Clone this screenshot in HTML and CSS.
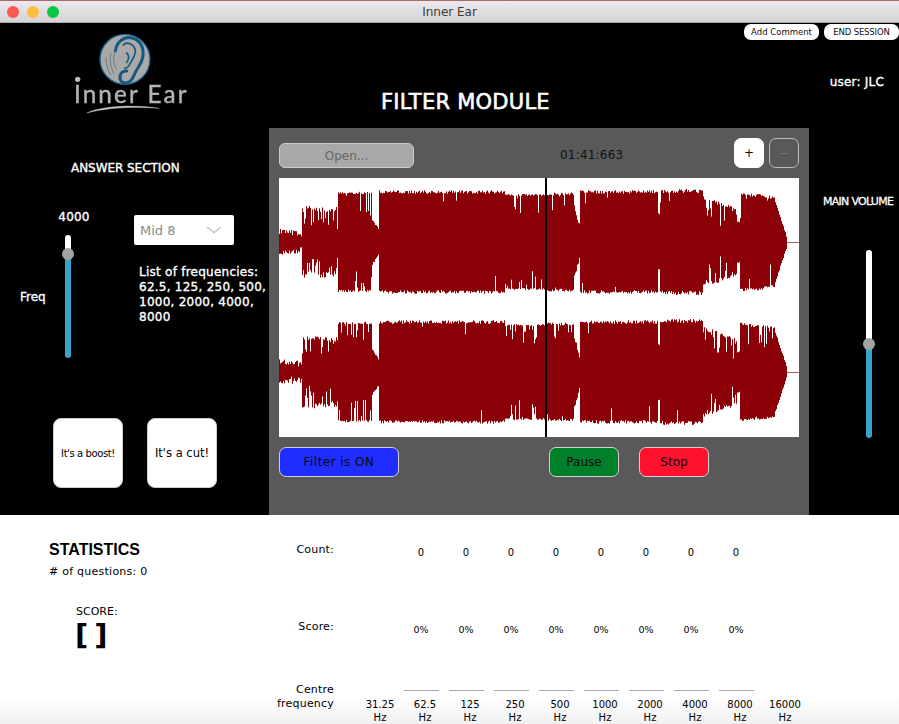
FILE: index.html
```html
<!DOCTYPE html>
<html lang="en">
<head>
<meta charset="utf-8">
<title>Inner Ear</title>
<link rel="stylesheet" href="styles.css">
</head>
<body>
<div class="window">
  <div class="titlebar">
    <div class="lights"><span class="light red"></span><span class="light amber"></span><span class="light green"></span></div>
    <div class="wintitle">Inner Ear</div>
  </div>
  <div class="stage">
    <header class="top">
      <svg class="logo" viewBox="0 0 420 285" width="140" height="95">
        <circle cx="195" cy="103" r="75" class="logo-disc"/>
        <path class="logo-ear" d="M166 78C170 50 190 36 212 38C238 41 252 66 249 92C247 114 232 128 224 146C218 160 214 172 198 174C182 175 174 158 184 144C188 139 194 137 200 138"/>
        <path class="logo-ear thin" d="M190 60C200 48 222 56 226 76C228 90 216 104 208 120C205 126 200 130 194 130"/>
        <path class="logo-ear thin" d="M200 84C208 90 208 102 200 112"/>
        <path class="logo-wave" d="M166 76C158 94 160 116 170 134M153 84C148 102 150 122 162 146M139 96C136 112 142 132 152 150"/>
        <circle cx="53" cy="163" r="8" class="logo-word-dot"/>
        <text x="42" y="234" class="logo-word">Inner Ear</text>
        <path class="logo-swoosh" d="M80 264C130 242 220 238 298 250C220 244 140 248 80 264Z"/>
      </svg>
      <h1 class="module">FILTER MODULE</h1>
      <div class="account">
        <div class="tools">
          <button class="tool">Add Comment</button>
          <button class="tool">END SESSION</button>
        </div>
        <div class="user">user: JLC</div>
      </div>
    </header>
    <div class="main">
      <section class="answer">
        <h2 class="answer-title">ANSWER SECTION</h2>
        <div class="answer-mid">
          <div class="freq-label">Freq</div>
          <div class="freq-col">
            <div class="freq-value">4000</div>
            <div class="slider short" style="--pos:15.4%"><span class="knob"></span></div>
          </div>
          <div class="choice">
            <div class="select"><span>Mid 8</span>
              <svg class="chevron" viewBox="0 0 16 8" width="16" height="8"><path d="M1 1L8 6.5L15 1"/></svg>
            </div>
            <p class="freq-list">List of frequencies: 62.5, 125, 250, 500, 1000, 2000, 4000, 8000</p>
          </div>
        </div>
        <div class="verdicts">
          <button class="verdict small">It's a boost!</button>
          <button class="verdict">It's a cut!</button>
        </div>
      </section>
      <section class="panel">
        <div class="panel-top">
          <button class="open">Open...</button>
          <div class="time">01:41:663</div>
          <div class="zoomers">
            <button class="zoomer on">+</button>
            <button class="zoomer">−</button>
          </div>
        </div>
        <div class="wave">
          <svg id="wave" viewBox="0 0 520 259" width="520" height="259"></svg>
          <span class="playhead"></span>
        </div>
        <div class="transport">
          <button class="tbtn filter">Filter is ON</button>
          <button class="tbtn pause">Pause</button>
          <button class="tbtn stop">Stop</button>
        </div>
      </section>
      <aside class="volume">
        <div class="volume-title">MAIN VOLUME</div>
        <div class="slider tall" style="--pos:50%"><span class="knob"></span></div>
      </aside>
    </div>
  </div>
  <div class="stats">
    <div class="summary">
      <h2 class="stats-title">STATISTICS</h2>
      <div class="questions"># of questions: 0</div>
      <div class="score-label">SCORE:</div>
      <div class="score-value">[ ]</div>
    </div>
    <div class="table">
      <div class="rowlabel">Count:</div>
      <span></span>
      <span class="cell">0</span><span class="cell">0</span><span class="cell">0</span><span class="cell">0</span><span class="cell">0</span><span class="cell">0</span><span class="cell">0</span><span class="cell">0</span>
      <span></span>
      <div class="rowlabel score">Score:</div>
      <span></span>
      <span class="cell pct">0%</span><span class="cell pct">0%</span><span class="cell pct">0%</span><span class="cell pct">0%</span><span class="cell pct">0%</span><span class="cell pct">0%</span><span class="cell pct">0%</span><span class="cell pct">0%</span>
      <span></span>
      <div class="rowlabel centre">Centre frequency</div>
      <span class="hz">31.25<br>Hz</span>
      <span class="hz ruled">62.5<br>Hz</span>
      <span class="hz ruled">125<br>Hz</span>
      <span class="hz ruled">250<br>Hz</span>
      <span class="hz ruled">500<br>Hz</span>
      <span class="hz ruled">1000<br>Hz</span>
      <span class="hz ruled">2000<br>Hz</span>
      <span class="hz ruled">4000<br>Hz</span>
      <span class="hz ruled">8000<br>Hz</span>
      <span class="hz">16000<br>Hz</span>
    </div>
  </div>
</div>
<script src="wave.js"></script>
</body>
</html>
```
FILE: styles.css
```css
* { box-sizing: border-box; }
html, body { margin: 0; padding: 0; background: #fff; }
body { font-family: "DejaVu Sans", "Liberation Sans", sans-serif; }
button { font-family: inherit; padding: 0; cursor: default; }
h1, h2, p { margin: 0; font-weight: 400; }

.window { width: 899px; height: 724px; display: flex; flex-direction: column; overflow: hidden; }

.titlebar { height: 23px; flex: none; display: flex; align-items: center; position: relative;
  background: linear-gradient(#ebe9eb, #d5d3d5); border-top: 1px solid #a96a6a; border-bottom: 1px solid #a9a9a9; }
.lights { display: flex; gap: 8px; padding-left: 7px; }
.light { width: 12px; height: 12px; border-radius: 50%; }
.light.red { background: #fc5753; }
.light.amber { background: #fdbc40; }
.light.green { background: #0ac840; }
.wintitle { position: absolute; left: 0; right: 0; text-align: center; font-size: 12px; color: #3c3c3c; }

.stage { height: 492px; flex: none; background: #000; color: #fff; display: flex; flex-direction: column; }
.top { height: 105px; flex: none; display: flex; }
.logo { flex: none; margin: 2px 0 0 60px; filter: blur(0.5px); }
.logo-disc { fill: #a9a9a9; stroke: #1d5f8a; stroke-width: 4; }
.logo-ear { fill: none; stroke: #14577f; stroke-width: 9; stroke-linecap: round; }
.logo-ear.thin { stroke-width: 5; }
.logo-wave { fill: none; stroke: #5f6f7a; stroke-width: 2.5; }
.logo-word { font-family: "Lato", sans-serif; font-size: 73px; fill: #b4b4b4; stroke: #b4b4b4; stroke-width: 1.2px; letter-spacing: 6.2px; }
.logo-word-dot { fill: #bcbcbc; }
.logo-swoosh { fill: #c8c8c8; stroke: #c8c8c8; stroke-width: 1; }
.module { margin: 65px 0 0 181px; font-size: 21px; line-height: 28px; -webkit-text-stroke: 0.6px #fff; white-space: nowrap; letter-spacing: 0.25px; width: 169px; }
.account { margin-left: auto; display: flex; flex-direction: column; align-items: flex-end; }
.tools { display: flex; gap: 5px; margin-top: 1px; }
.tool { width: 75px; height: 16px; border: 0; border-radius: 7px; background: #fff; color: #111; font-size: 8.5px; line-height: 16px; white-space: nowrap; }
.tool + .tool { letter-spacing: -0.15px; }
.user { margin: 34px 15px 0 0; font-size: 12px; line-height: 16px; -webkit-text-stroke: 0.35px #fff; letter-spacing: 0.2px; }

.main { flex: 1; display: flex; min-height: 0; }
.answer { width: 269px; flex: none; display: flex; flex-direction: column; }
.answer-title { margin: 32px 0 0 71px; font-size: 12px; line-height: 16px; -webkit-text-stroke: 0.35px #fff; letter-spacing: -0.05px; white-space: nowrap; }
.answer-mid { display: flex; margin-top: 33px; padding-left: 20px; }
.freq-label { font-size: 12px; line-height: 16px; -webkit-text-stroke: 0.35px #fff; margin-top: 80px; width: 38px; }
.freq-col { width: 76px; display: flex; flex-direction: column; }
.freq-value { width: 32px; text-align: center; font-size: 12px; line-height: 16px; -webkit-text-stroke: 0.35px #fff; letter-spacing: 0.2px; white-space: nowrap; }
.slider { position: relative; width: 6px; border-radius: 3px; background: linear-gradient(#fff 0, #fff var(--pos), #3aa3c9 var(--pos), #3aa3c9 100%); }
.slider.short { height: 123px; margin: 10px 0 0 7px; }
.slider.tall { height: 188px; }
.knob { position: absolute; left: 50%; top: var(--pos); width: 12px; height: 12px; margin: -6px 0 0 -6px; border-radius: 50%; background: #a2a2a2; }
.choice { width: 130px; margin-top: 6px; }
.select { width: 100px; height: 30px; background: #fff; border-radius: 2px; color: #8a8a8a; font-size: 13px; display: flex; align-items: center; justify-content: space-between; padding: 0 12px 0 6px; }
.chevron { fill: none; stroke: #c2c2c2; stroke-width: 1.5; }
.freq-list { margin: 20px 0 0 5px; font-size: 12px; line-height: 15px; -webkit-text-stroke: 0.35px #fff; letter-spacing: 0.25px; width: 132px; }
.verdicts { margin-top: auto; padding: 0 0 27px 53px; display: flex; gap: 24px; }
.verdict { width: 70px; height: 70px; border: 1px solid #ccc; border-radius: 8px; background: #fff; color: #000; font-size: 11.5px; white-space: nowrap; }
.verdict.small { font-size: 10px; letter-spacing: -0.4px; }

.panel { width: 540px; flex: none; background: #595959; padding: 10px; display: flex; flex-direction: column; }
.panel-top { height: 30px; display: flex; align-items: flex-end; margin-bottom: 10px; }
.open { flex: none; width: 135px; height: 25px; background: #a8a8a8; border: 1px solid #c9c9c9; border-radius: 6px; color: #666; font-size: 12px; }
.time { width: 320px; padding-left: 146px; align-self: center; margin-top: 4px; font-size: 12px; letter-spacing: 0.2px; color: #111; white-space: nowrap; }
.zoomers { margin-left: auto; flex: none; display: flex; gap: 5px; }
.zoomer { width: 30px; height: 30px; border: 1px solid #bdbdbd; border-radius: 7px; background: transparent; color: #777; font-size: 12px; }
.zoomer.on { background: #fff; border-color: #fff; color: #111; }
.wave { width: 520px; height: 259px; background: #fff; position: relative; }
.wave svg { display: block; }
.wave-line { stroke: #8b0007; fill: none; }
.wave-tail { stroke: #b5575b; fill: none; }
.playhead { position: absolute; left: 266px; top: 0; bottom: 0; width: 2px; background: #000; }
.transport { display: flex; margin-top: 10px; }
.tbtn { height: 30px; border: 1px solid #d0d0d0; border-radius: 7px; font-size: 12px; color: #0c0c0c; }
.filter { width: 120px; background: #1f2dff; margin-right: 150px; letter-spacing: 0.45px; }
.pause { width: 70px; background: #00802b; margin-right: 20px; }
.stop { width: 70px; background: #ff102f; }

.volume { flex: 1; display: flex; flex-direction: column; align-items: flex-start; }
.volume-title { margin: 66px 0 0 14px; font-size: 11px; line-height: 16px; -webkit-text-stroke: 0.3px #fff; letter-spacing: -0.72px; white-space: nowrap; }
.volume .slider { margin: 40px 0 0 57px; }

.stats { flex: 1; display: flex; color: #000; background: linear-gradient(#fff 0, #fff 180px, #f1f1f1 208px); border-bottom: 1px solid #222; }
.summary { width: 269px; flex: none; padding: 26px 0 0 49px; }
.stats-title { font-family: "Liberation Sans", sans-serif; font-size: 16px; line-height: 18px; font-weight: 700; }
.questions { font-size: 11px; line-height: 14px; margin-top: 6px; letter-spacing: 0.25px; }
.score-label { font-size: 11px; line-height: 14px; margin: 26px 0 0 27px; }
.score-value { font-size: 29px; line-height: 28px; font-weight: 700; margin: 2px 0 0 26px; letter-spacing: -2px; white-space: nowrap; }
.table { display: grid; grid-template-columns: 88.5px repeat(10, 45px); grid-template-rows: 77px 70px auto; padding-top: 28px; }
.rowlabel { font-size: 11px; line-height: 14px; text-align: right; padding-right: 23.5px; letter-spacing: 0.2px; }
.rowlabel.centre { margin-top: -7px; margin-left: -30px; }
.cell { font-size: 10px; line-height: 14px; text-align: center; padding-right: 8px; margin-top: 3px; }
.cell.pct { font-size: 9.5px; }
.hz { font-size: 10px; line-height: 13px; text-align: center; padding-top: 8px; position: relative; }
.hz.ruled::before { content: ""; position: absolute; left: 1px; top: 0; width: 35px; height: 1px; background: #a9a9a9; }
```
FILE: wave.js
```js
(function () {
  // Segments of the track envelope: from, to, amp start, amp end, spike chance, spike depth, jitter.
  var SEG = [
    [0, 23, 11, 8, .1, 3, 3], [23, 59, 34, 32, .3, 18, 3], [59, 93, 49, 49, .16, 22, 1.2],
    [93, 100, 22, 12, 0, 0, 1], [100, 226, 50, 50, .03, 22, 1.8], [226, 267, 47, 47, .18, 18, 1],
    [267, 295, 48, 48, .08, 18, 1.5], [295, 301, 35, 13, 0, 0, 2], [301, 379, 50, 50, .04, 18, 1.8],
    [379, 381, 28, 28, 0, 0, 1], [381, 424, 51, 51, .03, 14, 2.2], [424, 433, 44, 38, .3, 16, 2],
    [433, 448, 42, 34, .25, 24, 2], [448, 458, 36, 32, .2, 20, 2], [458, 461, 20, 20, 0, 0, 1],
    [461, 478, 48, 46, .14, 28, 1.5], [478, 496, 47, 44, .14, 24, 1.5], [496, 508, 40, 3, 0, 0, 1]
  ];
  var seed = 4711;
  function rnd() { seed = (seed * 16807) % 2147483647; return seed / 2147483647; }
  function amp(x) {
    for (var i = 0; i < SEG.length; i++) {
      var s = SEG[i];
      if (x >= s[0] && x < s[1]) {
        var a = s[2] + (s[3] - s[2]) * (x - s[0]) / (s[1] - s[0]);
        a += (rnd() - .5) * s[6] * 2;
        if (rnd() < s[4]) a -= rnd() * s[5];
        return Math.max(a, 1);
      }
    }
    return 1;
  }
  function channel(cy) {
    var d = '';
    for (var x = 0; x < 508; x++) {
      d += 'M' + (x + .5) + ' ' + (cy - amp(x)).toFixed(1) + 'V' + (cy + amp(x)).toFixed(1);
    }
    return d;
  }
  var svg = document.getElementById('wave');
  function add(d, cls) {
    var p = document.createElementNS('http://www.w3.org/2000/svg', 'path');
    p.setAttribute('d', d);
    p.setAttribute('class', cls);
    svg.appendChild(p);
  }
  [64, 194].forEach(function (cy) {
    add(channel(cy), 'wave-line');
    add('M508 ' + (cy + .5) + 'H520', 'wave-tail');
  });
})();
```
